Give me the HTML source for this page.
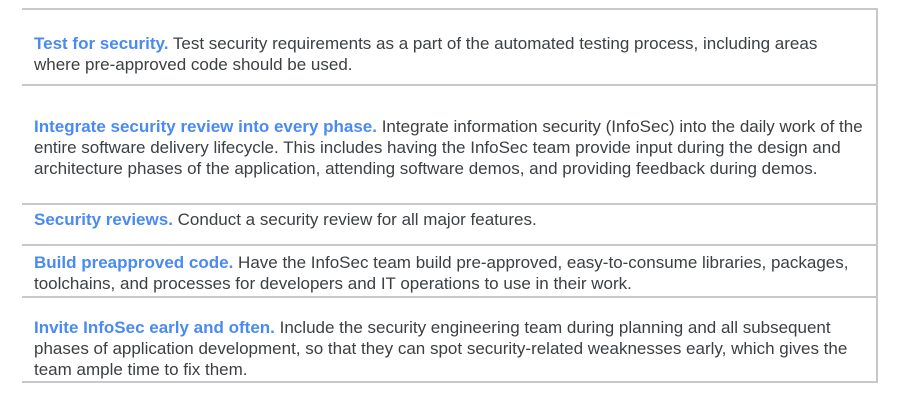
<html><head><style>
body{margin:0;width:900px;height:405px;background:#fff;position:relative;font-family:"Liberation Sans",sans-serif;font-size:17px;color:#3c4043;overflow:hidden}
.h{position:absolute;left:22px;width:856px;height:2px;background:#c8c8cc}
.v{position:absolute;left:876px;top:9px;width:2px;height:374px;background:#c8c8cc}
.t{position:absolute;left:34px;white-space:nowrap;line-height:21px}
b{color:#4a8af4}
</style></head><body>
<div class="h" style="top:8px"></div>
<div class="h" style="top:84px"></div>
<div class="h" style="top:203px"></div>
<div class="h" style="top:244px"></div>
<div class="h" style="top:296px"></div>
<div class="h" style="top:381px"></div>
<div class="v"></div>
<div class="t" style="top:33px"><b>Test for security.</b> Test security requirements as a part of the automated testing process, including areas<br>where pre-approved code should be used.</div>
<div class="t" style="top:116px"><b>Integrate security review into every phase.</b> Integrate information security (InfoSec) into the daily work of the<br>entire software delivery lifecycle. This includes having the InfoSec team provide input during the design and<br>architecture phases of the application, attending software demos, and providing feedback during demos.</div>
<div class="t" style="top:209px"><b>Security reviews.</b> Conduct a security review for all major features.</div>
<div class="t" style="top:252px"><b>Build preapproved code.</b> Have the InfoSec team build pre-approved, easy-to-consume libraries, packages,<br>toolchains, and processes for developers and IT operations to use in their work.</div>
<div class="t" style="top:317px"><b>Invite InfoSec early and often.</b> Include the security engineering team during planning and all subsequent<br>phases of application development, so that they can spot security-related weaknesses early, which gives the<br>team ample time to fix them.</div>
</body></html>
